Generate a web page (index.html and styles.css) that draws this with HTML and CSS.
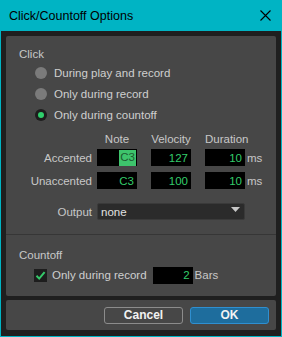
FILE: index.html
```html
<!DOCTYPE html>
<html>
<head>
<meta charset="utf-8">
<link rel="stylesheet" href="styles.css">
</head>
<body>
<div class="window">
  <div class="titlebar">
    <span class="title">Click/Countoff Options</span>
    <svg class="close" width="11" height="11" viewBox="0 0 11 11"><path d="M0.5 0.5 L10.5 10.5 M10.5 0.5 L0.5 10.5" stroke="#000" stroke-width="1.1" fill="none"/></svg>
  </div>
  <div class="client">
    <div class="panel main">
      <div class="section-label">Click</div>
      <div class="radio-row"><span class="radio"></span><span class="txt">During play and record</span></div>
      <div class="radio-row"><span class="radio"></span><span class="txt">Only during record</span></div>
      <div class="radio-row"><span class="radio on"><span class="dot"></span></span><span class="txt">Only during countoff</span></div>

      <div class="grid hdr">
        <span></span>
        <span class="colh">Note</span>
        <span class="colh">Velocity</span>
        <span class="colh">Duration</span>
        <span></span>
      </div>
      <div class="grid row">
        <span class="rlabel">Accented</span>
        <span class="box"><span class="sel">C3</span></span>
        <span class="box">127</span>
        <span class="box">10</span>
        <span class="unit">ms</span>
      </div>
      <div class="grid row">
        <span class="rlabel">Unaccented</span>
        <span class="box">C3</span>
        <span class="box">100</span>
        <span class="box">10</span>
        <span class="unit">ms</span>
      </div>
      <div class="grid outrow">
        <span class="rlabel">Output</span>
        <div class="dropdown"><span>none</span><svg class="arrow" width="9" height="5" viewBox="0 0 9 5"><path d="M0 0 H9 L4.5 5 Z" fill="#c8c8c8"/></svg></div>
      </div>
    </div>
    <div class="panel countoff">
      <div class="section-label">Countoff</div>
      <div class="check-row">
        <span class="check"><svg width="13" height="13" viewBox="0 0 13 13"><path d="M2.5 6.8 L5.2 9.6 L10.6 3.2" stroke="#35c96a" stroke-width="2" fill="none"/></svg></span>
        <span class="txt">Only during record</span>
        <span class="box bars">2</span>
        <span class="unit">Bars</span>
      </div>
    </div>
    <div class="panel buttons">
      <button class="btn cancel">Cancel</button>
      <button class="btn ok">OK</button>
    </div>
  </div>
</div>
</body>
</html>
```
FILE: styles.css
```css
html, body {
  margin: 0;
  padding: 0;
}
body {
  width: 282px;
  height: 337px;
  overflow: hidden;
  font-family: "Liberation Sans", Arial, sans-serif;
}
.window {
  width: 282px;
  height: 337px;
  box-sizing: border-box;
  background: #00b4c4;
  padding: 0 1px 1px;
}
.titlebar {
  height: 31px;
  display: flex;
  align-items: center;
  justify-content: space-between;
  padding: 0 10px 0 8px;
  box-sizing: border-box;
}
.title {
  font-size: 12.5px;
  color: #000;
  margin-top: 1px;
}
.close {
  display: block;
}
.client {
  height: 305px;
  box-sizing: border-box;
  background: #1f1f1f;
  padding: 5px 5px 6px;
}
.panel {
  background: #474747;
  color: #c8c8c8;
  font-size: 11px;
}
.main {
  height: 199px;
  box-sizing: border-box;
  padding-top: 10px;
  border-radius: 2px 2px 0 0;
  border-bottom: 1px solid #363636;
  display: flow-root;
}
.section-label {
  height: 16px;
  line-height: 16px;
  padding-left: 13px;
  font-size: 11.5px;
}
.radio-row {
  height: 21px;
  display: flex;
  align-items: center;
  padding-left: 29px;
}
.radio {
  width: 12px;
  height: 12px;
  border-radius: 50%;
  background: #7b7b7b;
  display: flex;
  align-items: center;
  justify-content: center;
  margin-right: 7px;
  flex: none;
}
.radio.on {
  background: #1d1d1d;
}
.dot {
  width: 6px;
  height: 6px;
  border-radius: 50%;
  background: #2fcf6c;
}
.txt {
  font-size: 11.5px;
  color: #cfcfcf;
}
.grid {
  display: grid;
  grid-template-columns: 86px 45px 54px 54px auto;
  align-items: center;
}
.hdr {
  margin-top: 6px;
  height: 16px;
  margin-bottom: 2px;
}
.colh {
  justify-self: end;
  width: 40px;
  text-align: center;
  font-size: 11.5px;
  white-space: nowrap;
}
.row {
  height: 17px;
  margin-bottom: 6px;
}
.rlabel {
  justify-self: end;
  font-size: 11.5px;
}
.box {
  justify-self: end;
  width: 40px;
  height: 17px;
  background: #000;
  color: #33cc6a;
  font-size: 11.5px;
  box-sizing: border-box;
  padding-right: 3px;
  display: flex;
  align-items: center;
  justify-content: flex-end;
}
.sel {
  background: #3ec46c;
  color: #1d5b31;
  padding: 1px 1px 2px;
  margin-right: -2px;
  line-height: 13px;
}
.unit {
  padding-left: 2px;
  font-size: 11.5px;
}
.outrow {
  margin-top: 14px;
  grid-template-columns: 86px auto;
  height: 17px;
}
.dropdown {
  margin-left: 5px;
  width: 148px;
  height: 17px;
  background: #2b2b2b;
  border: 1px solid #3a3a3a;
  border-radius: 2px;
  box-sizing: border-box;
  display: flex;
  align-items: center;
  justify-content: space-between;
  padding: 0 4px 0 3px;
  color: #e2e2e2;
  font-size: 11.5px;
}
.arrow {
  display: block;
  margin-top: -5px;
}
.countoff {
  height: 61px;
  box-sizing: border-box;
  padding-top: 12px;
  border-radius: 0 0 2px 2px;
  display: flow-root;
}
.check-row {
  display: flex;
  align-items: center;
  height: 18px;
  margin-top: 3px;
  padding-left: 28px;
}
.check {
  width: 13px;
  height: 13px;
  background: #1d1d1d;
  margin-right: 5px;
  flex: none;
}
.check svg { display: block; }
.bars {
  margin-left: 6px;
  height: 17px;
}
.buttons {
  margin-top: 4px;
  height: 30px;
  border-radius: 2px;
  display: flex;
  align-items: center;
  justify-content: flex-end;
  gap: 7px;
  padding-right: 7px;
}
.btn {
  width: 79px;
  height: 17px;
  border-radius: 3px;
  font-family: "Liberation Sans", Arial, sans-serif;
  font-weight: bold;
  font-size: 12px;
  color: #f2f2f2;
  padding: 0;
  box-sizing: border-box;
}
.cancel {
  background: #474747;
  border: 1px solid #8c8c8c;
}
.ok {
  background: #1e6d9d;
  border: 1px solid #2f8fd0;
}
```
